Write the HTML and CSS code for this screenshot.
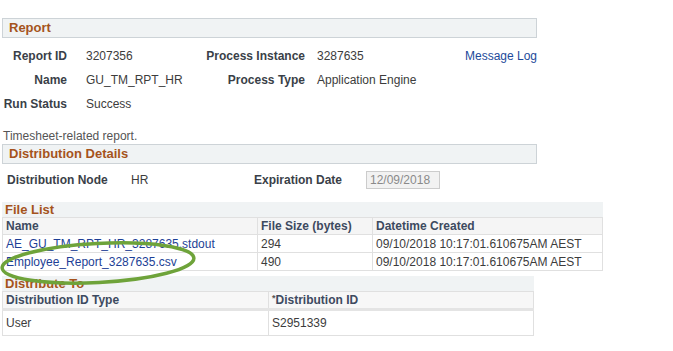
FILE: index.html
```html
<!DOCTYPE html>
<html lang="en">
<head>
    <meta charset="UTF-8">
    <title>Report Details</title>
    <link rel="stylesheet" href="styles.css">
</head>
<body>
    <div class="page">
        <div class="section-bar">Report</div>
        <div class="info-grid">
            <div class="label">Report ID</div>
            <div class="value">3207356</div>
            <div class="label">Process Instance</div>
            <div class="value value-wide">3287635</div>
            <div class="link-cell"><a href="#">Message Log</a></div>

            <div class="label">Name</div>
            <div class="value">GU_TM_RPT_HR</div>
            <div class="label">Process Type</div>
            <div class="value value-wide">Application Engine</div>
            <div></div>

            <div class="label">Run Status</div>
            <div class="value">Success</div>
            <div></div>
            <div></div>
            <div></div>
        </div>

        <p class="description">Timesheet-related report.</p>

        <div class="section-bar">Distribution Details</div>
        <div class="dist-row">
            <span class="label dist-node-label">Distribution Node</span>
            <span class="value dist-node-value">HR</span>
            <span class="label exp-label">Expiration Date</span>
            <span class="date-box">12/09/2018</span>
        </div>

        <div class="grid-block file-list">
            <div class="grid-title">File List</div>
            <table class="grid">
                <tr>
                    <th class="col-name">Name</th>
                    <th class="col-size">File Size (bytes)</th>
                    <th>Datetime Created</th>
                </tr>
                <tr>
                    <td><a href="#">AE_GU_TM_RPT_HR_3287635.stdout</a></td>
                    <td>294</td>
                    <td>09/10/2018 10:17:01.610675AM AEST</td>
                </tr>
                <tr>
                    <td><a href="#">Employee_Report_3287635.csv</a></td>
                    <td>490</td>
                    <td>09/10/2018 10:17:01.610675AM AEST</td>
                </tr>
            </table>
        </div>

        <div class="grid-block distribute">
            <div class="grid-title">Distribute To</div>
            <table class="grid">
                <tr>
                    <th class="col-type">Distribution ID Type</th>
                    <th><span class="req">*</span>Distribution ID</th>
                </tr>
                <tr class="tall-row">
                    <td>User</td>
                    <td>S2951339</td>
                </tr>
            </table>
        </div>

        <svg class="highlight-ring" width="200" height="48" viewBox="0 0 200 48">
            <ellipse cx="98" cy="23" rx="96" ry="19.5" transform="rotate(-3 98 23)" fill="none" stroke="#6ea33a" stroke-width="3.5"/>
        </svg>
    </div>
</body>
</html>
```

FILE: styles.css
```css
body {
    margin: 0;
    font-family: "Liberation Sans", Arial, sans-serif;
    font-size: 12px;
    color: #333;
    background: #fff;
}

a {
    color: #1d4a9a;
    text-decoration: none;
}

.page {
    position: relative;
    padding: 18px 0 0 2px;
}

.section-bar {
    box-sizing: border-box;
    width: 535px;
    height: 20px;
    line-height: 18px;
    padding-left: 6px;
    background: #f0f3f4;
    border: 1px solid #cdd3d7;
    color: #a5531c;
    font-size: 13px;
    font-weight: bold;
}

.label {
    font-weight: bold;
    color: #3a3f48;
}

.value {
    color: #3c3c3c;
}

.info-grid {
    display: grid;
    grid-template-columns: 65px 137px 101px 160px 72px;
    grid-auto-rows: 24px;
    align-items: center;
    margin-top: 6px;
}

.info-grid .label {
    text-align: right;
}

.info-grid .value {
    padding-left: 19px;
}

.info-grid .value-wide {
    padding-left: 12px;
}

.link-cell {
    text-align: right;
    white-space: nowrap;
}

.description {
    margin: 12px 0 0 1px;
    line-height: 16px;
    color: #555;
}

.dist-row {
    display: flex;
    align-items: center;
    height: 18px;
    margin-top: 7px;
}

.dist-node-label {
    margin-left: 5px;
    width: 124px;
}

.dist-node-value {
    width: 123px;
}

.exp-label {
    width: 112px;
}

.date-box {
    width: 69px;
    height: 16px;
    line-height: 16px;
    padding-left: 3px;
    border: 1px solid #cccccc;
    background: #f2f2f2;
    color: #8a8a8a;
}

.grid-block {
    background: #f0f3f4;
}

.file-list {
    width: 601px;
    margin-top: 13px;
}

.distribute {
    width: 532px;
    margin-top: 5px;
}

.grid-title {
    height: 15px;
    line-height: 15px;
    padding-left: 3px;
    color: #a5531c;
    font-size: 13px;
    font-weight: bold;
}

.grid {
    width: 100%;
    border-collapse: collapse;
    background: #fff;
}

.grid th,
.grid td {
    border: 1px solid #e0e0e0;
    padding: 0 3px;
    text-align: left;
    white-space: nowrap;
}

.grid th {
    height: 16px;
    background: #f5f5f5;
    color: #3d4a60;
    font-weight: bold;
}

.grid td {
    height: 17px;
    color: #3c3c3c;
}

.grid a {
    color: #1d3f96;
}

.col-name {
    width: 248px;
}

.col-size {
    width: 108px;
}

.col-type {
    width: 259px;
}

.distribute .grid th {
    border-bottom: 3px solid #e4e4e4;
    background: #f7f7f7;
}

.tall-row td {
    height: 24px;
}

.req {
    font-size: 9px;
    vertical-align: top;
    color: #555;
}

.highlight-ring {
    position: absolute;
    left: 0;
    top: 240px;
}
```
